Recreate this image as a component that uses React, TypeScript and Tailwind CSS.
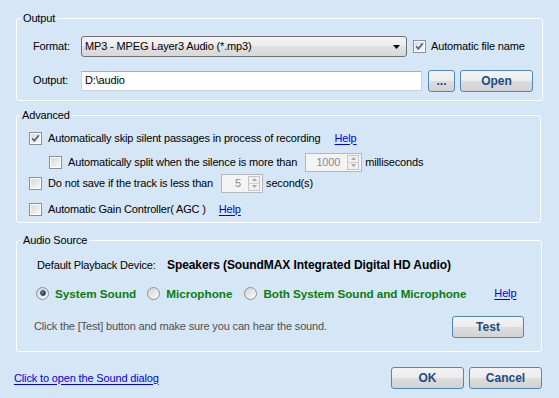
import React from "react";

const Check = ({ checked = false }: { checked?: boolean }) => (
  <span className="w-[13px] h-[13px] shrink-0 border border-[#8e8f8f] bg-white p-px flex">
    <span className="flex-1 bg-gradient-to-br from-[#d9dadb] to-[#f7f7f7] flex items-center justify-center">
      {checked && (
        <svg width="9" height="9" viewBox="0 0 9 9">
          <path d="M1.2 4.4 L3.4 6.8 L7.8 1.2" stroke="#4b5f95" strokeWidth="1.7" fill="none" />
        </svg>
      )}
    </span>
  </span>
);

const Radio = ({ checked = false }: { checked?: boolean }) => (
  <span className="w-[13px] h-[13px] shrink-0 rounded-full border border-[#8e8f8f] bg-gradient-to-br from-[#d3d4d5] to-[#fbfbfb] flex items-center justify-center">
    {checked && (
      <span className="w-[6px] h-[6px] rounded-full bg-gradient-to-br from-[#6fa3d0] to-[#0e3b66] border border-[#1a3e60]" />
    )}
  </span>
);

const Btn = ({ children, w }: { children: React.ReactNode; w: string }) => (
  <button
    className={`${w} h-[22px] rounded-[3px] border border-[#4f87bd] bg-[linear-gradient(#f3f3f3_0%,#ececec_50%,#dddddd_50%,#d2d2d2_100%)] text-[12px] font-bold text-[#1d4b85] leading-none tracking-normal flex items-center justify-center`}
  >
    {children}
  </button>
);

const Spin = ({ value, w }: { value: string; w: string }) => (
  <div className={`${w} h-[19px] border border-[#b4b8bd] bg-[#f4f4f4] flex items-center`}>
    <span className="flex-1 text-right pr-[7px] text-[#8a8a8a]">{value}</span>
    <span className="w-[12px] h-[15px] mr-[2px] flex flex-col border border-[#c6c6c6] bg-[#f0f0f0]">
      <span className="flex-1 flex items-center justify-center border-b border-[#d0d0d0]">
        <svg width="5" height="3"><path d="M0 3 L2.5 0 L5 3Z" fill="#a8a8a8" /></svg>
      </span>
      <span className="flex-1 flex items-center justify-center">
        <svg width="5" height="3"><path d="M0 0 L2.5 3 L5 0Z" fill="#a8a8a8" /></svg>
      </span>
    </span>
  </div>
);

const Link = ({ children }: { children: React.ReactNode }) => (
  <span className="text-[#0000ee] underline underline-offset-[2px]">{children}</span>
);

export default function App() {
  return (
    <div className="w-[559px] h-[398px] bg-[#d5e6f7] pt-[12px] font-['Liberation_Sans',sans-serif] text-[11px] leading-[13px] tracking-[-0.15px] text-black">
      {/* Output */}
      <fieldset className="ml-[16px] w-[527px] border border-white rounded-[3px]">
        <legend className="ml-[4px] px-[2px]">Output</legend>
        <div className="pl-[16px] pt-[11px] pb-[9px]">
          <div className="flex items-center h-[21px]">
            <span className="w-[48px]">Format:</span>
            <div className="w-[326px] h-[21px] rounded-[3px] border border-[#707070] bg-[linear-gradient(#f4f4f4_0%,#ececec_50%,#e1e1e1_50%,#d8d8d8_100%)] flex items-center pl-[3px]">
              <span className="flex-1">MP3 - MPEG Layer3 Audio (*.mp3)</span>
              <svg width="7" height="4" className="mr-[6px]">
                <path d="M0 0 L7 0 L3.5 4Z" fill="#000" />
              </svg>
            </div>
            <span className="ml-[6px]">
              <Check checked />
            </span>
            <span className="ml-[5px]">Automatic file name</span>
          </div>
          <div className="flex items-center h-[21px] mt-[13px]">
            <span className="w-[48px]">Output:</span>
            <div className="w-[341px] h-[20px] border border-[#c9d1da] border-t-[#abadb3] bg-white flex items-center pl-[3px]">
              D:\audio
            </div>
            <span className="ml-[6px]">
              <Btn w="w-[27px]">...</Btn>
            </span>
            <span className="ml-[5px]">
              <Btn w="w-[73px]">Open</Btn>
            </span>
          </div>
        </div>
      </fieldset>

      {/* Advanced */}
      <fieldset className="ml-[16px] mt-[8px] w-[525px] border border-white rounded-[3px]">
        <legend className="ml-[3px] px-[2px]">Advanced</legend>
        <div className="pl-[12px] pt-[6px] pb-[3px]">
          <div className="flex items-center h-[20px]">
            <Check checked />
            <span className="ml-[6px]">Automatically skip silent passages in process of recording</span>
            <span className="ml-[14px]">
              <Link>Help</Link>
            </span>
          </div>
          <div className="flex items-center h-[20px] mt-[4px] pl-[20px]">
            <Check />
            <span className="ml-[6px]">Automatically split when the silence is more than</span>
            <span className="ml-[8px]">
              <Spin value="1000" w="w-[57px]" />
            </span>
            <span className="ml-[3px]">milliseconds</span>
          </div>
          <div className="flex items-center h-[20px] mt-[1px]">
            <Check />
            <span className="ml-[6px]">Do not save if the track is less than</span>
            <span className="ml-[8px]">
              <Spin value="5" w="w-[42px]" />
            </span>
            <span className="ml-[3px]">second(s)</span>
          </div>
          <div className="flex items-center h-[20px] mt-[6px]">
            <Check />
            <span className="ml-[6px]">Automatic Gain Controller( AGC )</span>
            <span className="ml-[13px]">
              <Link>Help</Link>
            </span>
          </div>
        </div>
      </fieldset>

      {/* Audio Source */}
      <fieldset className="ml-[16px] mt-[11px] w-[526px] border border-white rounded-[3px]">
        <legend className="ml-[4px] px-[2px]">Audio Source</legend>
        <div className="pl-[19px] pt-[8px] pb-[14px]">
          <div className="flex items-center h-[20px] pl-[1px]">
            <span className="w-[130px]">Default Playback Device:</span>
            <span className="font-bold text-[12px] tracking-[-0.08px]">
              Speakers (SoundMAX Integrated Digital HD Audio)
            </span>
          </div>
          <div className="flex items-center h-[20px] mt-[8px] font-bold text-[11.7px] tracking-normal text-[#0b7d0b]">
            <Radio checked />
            <span className="ml-[6px]">System Sound</span>
            <span className="ml-[11px]">
              <Radio />
            </span>
            <span className="ml-[6px]">Microphone</span>
            <span className="ml-[12px]">
              <Radio />
            </span>
            <span className="ml-[6px] tracking-[-0.05px]">Both System Sound and Microphone</span>
            <span className="ml-[28px] font-normal text-[11px] tracking-[-0.15px]">
              <Link>Help</Link>
            </span>
          </div>
          <div className="flex items-center h-[21px] mt-[13px]">
            <span className="w-[418px] text-[#505050] -ml-[2px]">
              Click the [Test] button and make sure you can hear the sound.
            </span>
            <Btn w="w-[72px]">Test</Btn>
          </div>
        </div>
      </fieldset>

      {/* Bottom */}
      <div className="flex items-center h-[22px] mt-[15px] pl-[14px]">
        <span className="w-[377px]">
          <Link>Click to open the Sound dialog</Link>
        </span>
        <Btn w="w-[73px]">OK</Btn>
        <span className="ml-[5px]">
          <Btn w="w-[73px]">Cancel</Btn>
        </span>
      </div>
    </div>
  );
}
